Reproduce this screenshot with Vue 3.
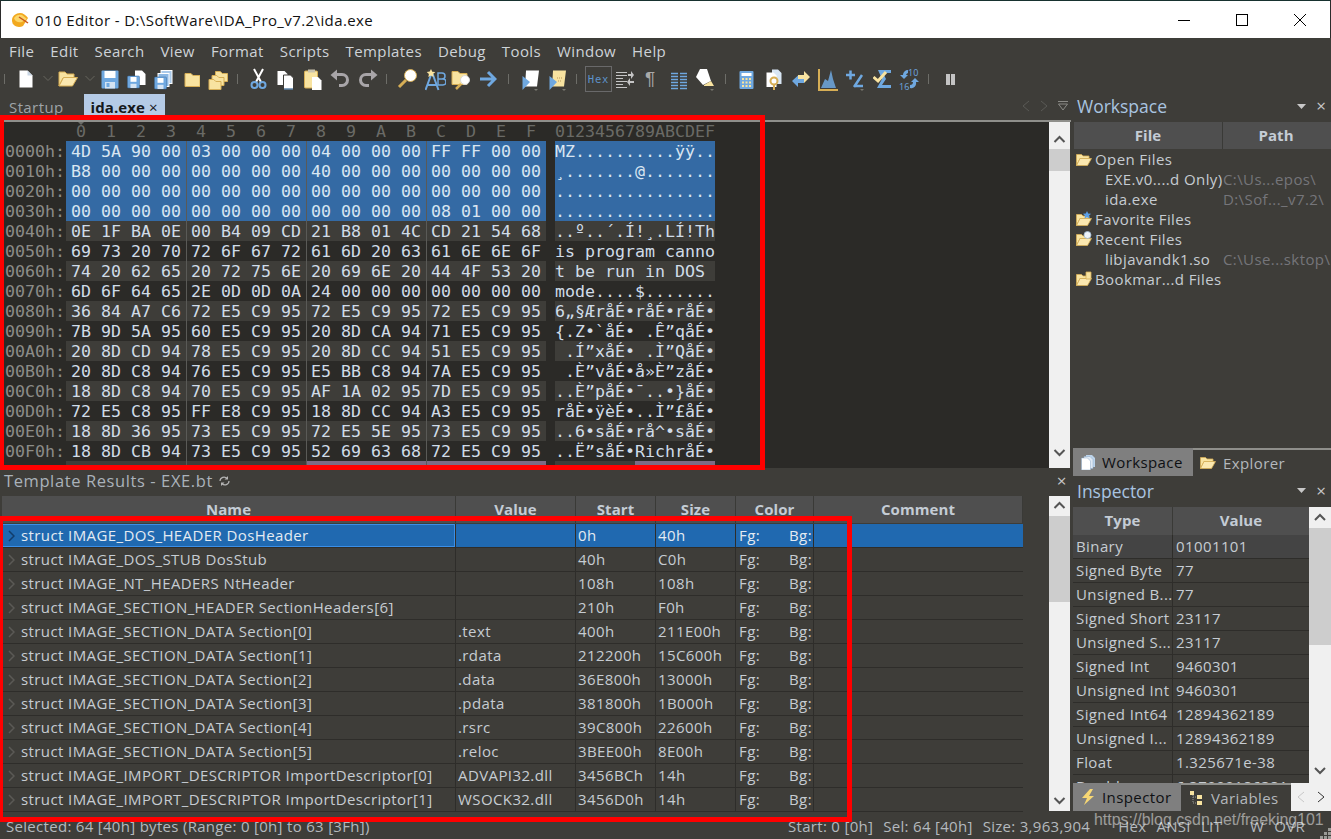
<script setup>
const menus = ['File', 'Edit', 'Search', 'View', 'Format', 'Scripts', 'Templates', 'Debug', 'Tools', 'Window', 'Help']

const Y = '#f8e3a0'
const YS = '#d6ae55'
const B = '#6fa8e0'

const folder = (x, y, w, h) =>
  `<path d="M${x + 0.5} ${y + 0.5}h${w * 0.4}l2 2h${w * 0.6 - 2}v${h - 2}h-${w}z" fill="${Y}" stroke="${YS}"/>`
const floppy = (x, y, s) =>
  `<rect x="${x}" y="${y}" width="${s}" height="${s}" rx="1" fill="${B}" stroke="#3f6f9f" stroke-width=".5"/><rect x="${x + 3}" y="${y + 1}" width="${s - 6}" height="${s * 0.4}" fill="#fff"/><rect x="${x + 3}" y="${y + s * 0.65}" width="${s - 6}" height="${s * 0.35}" fill="#d5e4f3"/>`
const drop = (x) => `<path d="M${x} 23h4l-2 2z" fill="#77776f"/>`

const icons = {
  new: '<path d="M.5 4.500h8l5 5v12H.5z" fill="#fff"/><path d="M8.500 4.500v5h5z" fill="#c9d6e4"/>',
  chev: '<path d="M.5 10l4.500 4.500L9.500 10" fill="none" stroke="#66665f"/>',
  open: `<path d="M1 6h6l2 2h7v4H5L1 20z" fill="${Y}" stroke="${YS}"/><path d="M5.500 11.500h14l-5 8.500H1z" fill="#fae8b0" stroke="${YS}"/>`,
  save: '<rect x=".5" y="4.500" width="17" height="18" rx="1" fill="#6fa8e0"/><rect x="3.500" y="5" width="11" height="7" fill="#fff"/><rect x="4" y="16" width="10" height="6.500" fill="#d5e4f3"/><rect x="5.500" y="17" width="3" height="4" fill="#6fa8e0"/>',
  saveas: `<path d="M8 4.500h7l3.500 3.500v11H8z" fill="#fff"/>${floppy(0.5, 10, 12)}`,
  saveall: `<rect x="7" y="4.500" width="11" height="13" fill="#a9c9ea" stroke="#fff"/><rect x="4" y="7.500" width="11" height="13" fill="#8cb8e4" stroke="#fff"/>${floppy(0.5, 11, 12)}`,
  folder: folder(0.5, 7, 15, 13),
  folders: `${folder(7, 5, 12, 10)}${folder(3.500, 9, 12, 10)}${folder(0.5, 13, 12, 10)}`,
  cut: '<path d="M4 3l7 13M13 3L6 16" stroke="#fff" stroke-width="2"/><circle cx="4.500" cy="19" r="3" fill="none" stroke="#6fa8e0" stroke-width="2"/><circle cx="12.500" cy="19" r="3" fill="none" stroke="#6fa8e0" stroke-width="2"/>',
  copy: '<path d="M.5 5h7l3 3v11H.5z" fill="#fff"/><path d="M6.500 9h7l3 3v11h-10z" fill="#fff" stroke="#3e3d39"/><path d="M7 23h9" stroke="#6fa8e0"/>',
  paste: `<rect x=".5" y="5" width="13" height="17" rx="1" fill="${Y}" stroke="${YS}"/><rect x="4" y="3.500" width="7" height="3" fill="#c9c3ae"/><path d="M8 11h6l3.500 3.500V24H8z" fill="#fff"/>`,
  undo: '<path d="M5 8.500h7a5.500 5.500 0 0 1 0 11H9" fill="none" stroke="#a8a5a8" stroke-width="3"/><path d="M7 3.500v11L.5 9z" fill="#a8a5a8"/>',
  redo: '<path d="M15 8.500H8a5.500 5.500 0 0 0 0 11h3" fill="none" stroke="#a8a5a8" stroke-width="3"/><path d="M13 3.500v11L19.500 9z" fill="#a8a5a8"/>',
  find: `<circle cx="13.500" cy="9.500" r="6" fill="#fff" stroke="${YS}"/><path d="M9 14l-7 7" stroke="${YS}" stroke-width="3"/>`,
  replace: `<path d="M.5 24L6 9h2l5.500 15M3 19h8" fill="none" stroke="${B}" stroke-width="2"/><path d="M6 3l1.300 2.700 3 .4-2.200 2 .6 3L6 9.500 3.300 11l.6-3-2.200-2 3-.4z" fill="${Y}"/><path d="M13 7h4a2.500 2.500 0 0 1 0 6h-4zM13 13h5a2.500 2.500 0 0 1 0 6h-5z" fill="none" stroke="${B}" stroke-width="1.500"/>`,
  findfiles: `${folder(0.5, 5, 15, 13)}<circle cx="14" cy="14" r="4.500" fill="#fff" stroke="#d8d8d8"/><path d="M10 18l-5 5" stroke="${YS}" stroke-width="2.500"/>`,
  goto: `<path d="M1 13h13M9 6l7 7-7 7" fill="none" stroke="${B}" stroke-width="3"/>`,
  script: `<path d="M4 4.500h13l-2 16H3z" fill="#fff"/><path d="M.5 10L8 16 .5 24z" fill="${B}"/>${drop(12)}`,
  template: `<path d="M4 4.500h13l-2 16H3z" fill="${Y}"/><path d="M8 12h5M9 15h4" stroke="#b9975a" stroke-dasharray="1 1"/><path d="M.5 10L8 16 .5 24z" fill="${B}"/>${drop(13)}`,
  lines: '<path d="M0 6.500h11M0 9.500h11M0 12.500h7M0 15.500h11M0 18.500h7M0 21.500h11" stroke="#c5c5c5"/><path d="M12 8h3V5l3 4-3 4v-3h-3zM18 15h-4v-3l-3 4 3 4v-3h4z" fill="#c5c5c5"/>',
  columns: '<path d="M0 7.500h7M0 10.500h7M0 13.500h7M0 16.500h7M0 19.500h7M0 22.500h7M9 7.500h7M9 10.500h7M9 13.500h7M9 16.500h7M9 19.500h7M9 22.500h7" stroke="#6fa8e0" stroke-width="1.500"/>',
  highlight: `<path d="M4 3l7 0 4 12-8 4-7-8z" fill="#fff"/><path d="M8 19l7-4 3 5H8z" fill="${Y}"/>${drop(14)}`,
  calc: `<rect x=".5" y="5" width="14" height="18" rx="1" fill="${B}"/><rect x="2.500" y="7" width="10" height="3" fill="#fff"/><path d="M3 12h2v2H3zM6.500 12h2v2h-2zM10 12h2v2h-2zM3 15.500h2v2H3zM6.500 15.500h2v2h-2zM10 15.500h2v2h-2zM3 19h2v2H3zM6.500 19h2v2h-2zM10 19h2v2h-2z" fill="${Y}"/>`,
  helpdoc: `<path d="M6 3.500h6l3.500 3.500v11H6z" fill="#d8e6f4"/><path d="M.5 6.500h7l3 3V21H.5z" fill="#fff"/><circle cx="8" cy="15" r="3.500" fill="none" stroke="${YS}" stroke-width="2"/><path d="M8 19v5" stroke="${YS}" stroke-width="2"/>`,
  arrows: `<path d="M6 9h6V5l6 6-6 6v-4H6z" fill="${Y}"/><path d="M12 13H6V9.500L0 15l6 6v-4h6z" fill="${B}"/>`,
  hist: `<path d="M1 3v21h19" fill="none" stroke="${YS}" stroke-width="2"/><path d="M3 22l4-9 3 2 3-11 2 9 3 9z" fill="${B}" opacity=".85"/>`,
  plusminus: `<path d="M0 9h9M4.500 4.500v9M8 21L16 9M8 20h9" fill="none" stroke="${B}" stroke-width="2.500"/>${drop(14)}`,
  check: `<path d="M5 4h13v3H10l3 6-4 6h9v3H4l5-9" fill="${B}"/><path d="M.5 11l4.500 4 8-9" fill="none" stroke="${Y}" stroke-width="3"/>`,
  conv: `<text x="9" y="10" font-size="9" letter-spacing="0" fill="${B}" font-family="Open Sans, sans-serif">10</text><text x="0" y="24" font-size="9" letter-spacing="0" fill="${B}" font-family="Open Sans, sans-serif">16</text><path d="M9 4a5 5 0 0 0-5 5H1l4 4 4-4H7a3 3 0 0 1 2-2zM11 22a5 5 0 0 0 6-6h3l-4-4-4 4h2a3 3 0 0 1-3 3z" fill="${B}"/>`,
  pause: '<path d="M0 8h4v11H0zM5 8h4v11H5z" fill="#c4c4c4"/>',
}

const toolDefs = [
  ['sep', 4, 1], ['new', 19, 14], ['chev', 43, 10], ['open', 58, 20], ['chev', 85, 10], ['save', 101, 18],
  ['saveas', 127, 19], ['saveall', 154, 19], ['folder', 184, 16], ['folders', 208, 20], ['sep', 237, 1],
  ['cut', 250, 17], ['copy', 277, 17], ['paste', 304, 18], ['undo', 330, 20], ['redo', 358, 20], ['sep', 386, 1],
  ['find', 397, 21], ['replace', 425, 21], ['findfiles', 451, 21], ['goto', 479, 18], ['sep', 508, 1],
  ['script', 522, 18], ['template', 549, 18], ['sep', 576, 1], ['hex', 585, 27], ['lines', 616, 18],
  ['pilcrow', 645, 12], ['columns', 671, 16], ['highlight', 696, 18], ['sep', 725, 1], ['calc', 739, 15],
  ['helpdoc', 766, 16], ['arrows', 792, 18], ['hist', 818, 20], ['plusminus', 846, 18], ['check', 873, 18],
  ['conv', 899, 20], ['sep', 928, 1], ['pause', 946, 9],
]

let toolEnd = 0
const tools = toolDefs.map(([name, x, w]) => {
  const t = { name, w, gap: x - toolEnd }
  toolEnd = x + w
  return t
})

const hexRows = [
  ['4D 5A 90 00 03 00 00 00 04 00 00 00 FF FF 00 00', 'MZ..........ÿÿ..'],
  ['B8 00 00 00 00 00 00 00 40 00 00 00 00 00 00 00', '¸.......@.......'],
  ['00 00 00 00 00 00 00 00 00 00 00 00 00 00 00 00', '................'],
  ['00 00 00 00 00 00 00 00 00 00 00 00 08 01 00 00', '................'],
  ['0E 1F BA 0E 00 B4 09 CD 21 B8 01 4C CD 21 54 68', '..º..´.Í!¸.LÍ!Th'],
  ['69 73 20 70 72 6F 67 72 61 6D 20 63 61 6E 6E 6F', 'is program canno'],
  ['74 20 62 65 20 72 75 6E 20 69 6E 20 44 4F 53 20', 't be run in DOS '],
  ['6D 6F 64 65 2E 0D 0D 0A 24 00 00 00 00 00 00 00', 'mode....$.......'],
  ['36 84 A7 C6 72 E5 C9 95 72 E5 C9 95 72 E5 C9 95', '6„§ÆråÉ•råÉ•råÉ•'],
  ['7B 9D 5A 95 60 E5 C9 95 20 8D CA 94 71 E5 C9 95', '{.Z•`åÉ• .Ê”qåÉ•'],
  ['20 8D CD 94 78 E5 C9 95 20 8D CC 94 51 E5 C9 95', ' .Í”xåÉ• .Ì”QåÉ•'],
  ['20 8D C8 94 76 E5 C9 95 E5 BB C8 94 7A E5 C9 95', ' .È”våÉ•å»È”zåÉ•'],
  ['18 8D C8 94 70 E5 C9 95 AF 1A 02 95 7D E5 C9 95', '..È”påÉ•¯..•}åÉ•'],
  ['72 E5 C8 95 FF E8 C9 95 18 8D CC 94 A3 E5 C9 95', 'råÈ•ÿèÉ•..Ì”£åÉ•'],
  ['18 8D 36 95 73 E5 C9 95 72 E5 5E 95 73 E5 C9 95', '..6•såÉ•rå^•såÉ•'],
  ['18 8D CB 94 73 E5 C9 95 52 69 63 68 72 E5 C9 95', '..Ë”såÉ•RichråÉ•'],
].map(([bytes, ascii], i) => {
  const b = bytes.split(' ')
  return {
    addr: `00${i.toString(16).toUpperCase()}0h:`,
    groups: [b.slice(0, 4), b.slice(4, 8), b.slice(8, 12), b.slice(12, 16)],
    ascii,
    cls: i < 4 ? 'sel' : i % 2 === 0 ? 'band' : '',
  }
})

const ruler = '0123456789ABCDEF'.split('')

const tmplRows = [
  ['struct IMAGE_DOS_HEADER DosHeader', '', '0h', '40h'],
  ['struct IMAGE_DOS_STUB DosStub', '', '40h', 'C0h'],
  ['struct IMAGE_NT_HEADERS NtHeader', '', '108h', '108h'],
  ['struct IMAGE_SECTION_HEADER SectionHeaders[6]', '', '210h', 'F0h'],
  ['struct IMAGE_SECTION_DATA Section[0]', '.text', '400h', '211E00h'],
  ['struct IMAGE_SECTION_DATA Section[1]', '.rdata', '212200h', '15C600h'],
  ['struct IMAGE_SECTION_DATA Section[2]', '.data', '36E800h', '13000h'],
  ['struct IMAGE_SECTION_DATA Section[3]', '.pdata', '381800h', '1B000h'],
  ['struct IMAGE_SECTION_DATA Section[4]', '.rsrc', '39C800h', '22600h'],
  ['struct IMAGE_SECTION_DATA Section[5]', '.reloc', '3BEE00h', '8E00h'],
  ['struct IMAGE_IMPORT_DESCRIPTOR ImportDescriptor[0]', 'ADVAPI32.dll', '3456BCh', '14h'],
  ['struct IMAGE_IMPORT_DESCRIPTOR ImportDescriptor[1]', 'WSOCK32.dll', '3456D0h', '14h'],
]

const inspector = [
  ['Binary', '01001101'],
  ['Signed Byte', '77'],
  ['Unsigned B...', '77'],
  ['Signed Short', '23117'],
  ['Unsigned S...', '23117'],
  ['Signed Int', '9460301'],
  ['Unsigned Int', '9460301'],
  ['Signed Int64', '12894362189'],
  ['Unsigned I...', '12894362189'],
  ['Float', '1.325671e-38'],
  ['Double', '6.37099186381'],
]

const tree = [
  { label: 'Open Files', icon: 'open' },
  { label: 'EXE.v0....d Only)', path: 'C:\\Us...epos\\' },
  { label: 'ida.exe', path: 'D:\\Sof..._v7.2\\' },
  { label: 'Favorite Files', icon: 'fav' },
  { label: 'Recent Files', icon: 'recent' },
  { label: 'libjavandk1.so', path: 'C:\\Use...sktop\\' },
  { label: 'Bookmar...d Files', icon: 'book' },
]
</script>

<template>
  <div class="app">
    <header class="titlebar">
      <svg class="logo" width="18" height="16" viewBox="0 0 18 16">
        <path d="M1 8C1 4 5 1 9 1c3 0 6 2 8 5l-5 8c-4 2-11 1-11-6z" fill="#f2a91f" />
        <path d="M3 6c2-3 5-4 8-3l5 4-5 3C8 11 4 10 3 6z" fill="#fbd66a" />
        <path d="M8 5l9 6" stroke="#c9541a" stroke-width="1.500" />
      </svg>
      <span class="title-text">010 Editor - D:\SoftWare\IDA_Pro_v7.2\ida.exe</span>
      <div class="win-btns">
        <svg width="12" height="12" viewBox="0 0 12 12"><path d="M0 6.500h12" stroke="#000" /></svg>
        <svg width="12" height="12" viewBox="0 0 12 12"><rect x=".5" y=".5" width="11" height="11" fill="none" stroke="#000" /></svg>
        <svg width="12" height="12" viewBox="0 0 12 12"><path d="M0 0l12 12M12 0L0 12" stroke="#000" /></svg>
      </div>
    </header>

    <nav class="menubar">
      <span v-for="m in menus" :key="m">{{ m }}</span>
    </nav>

    <div class="toolbar">
      <template v-for="(t, i) in tools" :key="i">
        <span v-if="t.name === 'sep'" class="tool-sep" :style="{ marginLeft: t.gap + 'px' }"></span>
        <span v-else-if="t.name === 'hex'" class="hex-btn" :style="{ marginLeft: t.gap + 'px' }">Hex</span>
        <span v-else-if="t.name === 'pilcrow'" class="pilcrow" :style="{ marginLeft: t.gap + 'px' }">¶</span>
        <svg
          v-else
          class="tool"
          :width="t.w"
          height="26"
          :viewBox="`0 0 ${t.w} 26`"
          :style="{ marginLeft: t.gap + 'px' }"
          v-html="icons[t.name]"
        ></svg>
      </template>
    </div>

    <div class="work">
      <div class="left">
        <section class="doc">
          <div class="tabstrip">
            <span class="tab-plain">Startup</span>
            <span class="tab-on">ida.exe <i>×</i></span>
            <div class="tab-nav">
              <svg width="8" height="12" viewBox="0 0 8 12"><path d="M7 1L1 6l6 5" fill="none" stroke="#5a5a56" /></svg>
              <svg width="8" height="12" viewBox="0 0 8 12"><path d="M1 1l6 5-6 5" fill="none" stroke="#5a5a56" /></svg>
              <svg width="10" height="12" viewBox="0 0 10 12"><path d="M0 1.500h10M.5 4l4.500 6 4.500-6z" fill="none" stroke="#8a8a86" /></svg>
            </div>
          </div>
          <div class="doc-line"></div>
          <div class="doc-body">
            <div class="hexview">
              <div class="ruler">
                <span class="addr"></span>
                <div class="ruler-hex"><span v-for="r in ruler" :key="r" class="ruler-col">{{ r }}</span></div>
                <span class="ascii plain">0123456789ABCDEF</span>
              </div>
              <div v-for="row in hexRows" :key="row.addr" class="hexrow">
                <span class="addr">{{ row.addr }}</span>
                <div class="hexcells" :class="row.cls">
                  <span v-for="(g, gi) in row.groups" :key="gi" class="grp">
                    <span v-for="(b, bi) in g" :key="bi" class="byte">{{ b }}</span>
                  </span>
                </div>
                <span class="ascii" :class="row.cls">{{ row.ascii }}</span>
              </div>
              <div class="hexrow">
                <span class="addr"></span>
                <div class="hexcells band">
                  <span class="grp"></span><span class="grp"></span>
                  <span class="grp pe"></span><span class="grp pe"></span>
                </div>
                <div class="ascii-split"><span class="band"></span><span class="pe"></span></div>
              </div>
            </div>
            <div class="sb">
              <svg class="sb-arrow" width="21" height="27" viewBox="0 0 21 27"><path d="M5.500 20l5-5 5 5" fill="none" stroke="#555" stroke-width="2" /></svg>
              <div class="sb-thumb thumb-doc"></div>
              <div class="sb-fill"></div>
              <svg class="sb-arrow" width="21" height="27" viewBox="0 0 21 27"><path d="M5.500 9l5 5 5-5" fill="none" stroke="#555" stroke-width="2" /></svg>
            </div>
          </div>
        </section>

        <section class="tmpl">
          <div class="tmpl-title">
            <span>Template Results - EXE.bt</span>
            <svg width="11" height="10" viewBox="0 0 11 10"><path d="M1 5a4 4 0 0 1 7-2.500M10 5a4 4 0 0 1-7 2.500" fill="none" stroke="#b5b5b5" stroke-width="1.200" /><path d="M9 0v3.500H5.500zM2 10V6.500h3.500z" fill="#b5b5b5" /></svg>
            <i class="x">×</i>
          </div>
          <div class="tmpl-body">
            <div class="tmpl-table">
              <div class="t-head">
                <span>Name</span><span>Value</span><span>Start</span><span>Size</span><span>Color</span><span>Comment</span>
              </div>
              <div v-for="(r, i) in tmplRows" :key="i" class="t-row" :class="{ on: i === 0 }">
                <span class="c-name">
                  <svg width="7" height="12" viewBox="0 0 7 12"><path d="M1 1l5 5-5 5" fill="none" :stroke="i === 0 ? '#123d6b' : '#5b5a56'" stroke-width="1.500" /></svg>
                  {{ r[0] }}
                </span>
                <span class="c-txt">{{ r[1] }}</span>
                <span class="c-txt">{{ r[2] }}</span>
                <span class="c-txt">{{ r[3] }}</span>
                <span class="c-color"><b>Fg:</b><b>Bg:</b></span>
                <span></span>
              </div>
            </div>
            <div class="sb">
              <svg class="sb-arrow" width="21" height="20" viewBox="0 0 21 20"><path d="M5.500 12l5-5 5 5" fill="none" stroke="#555" stroke-width="2" /></svg>
              <div class="sb-thumb thumb-tmpl"></div>
              <div class="sb-fill"></div>
              <svg class="sb-arrow" width="21" height="20" viewBox="0 0 21 20"><path d="M5.500 7l5 5 5-5" fill="none" stroke="#555" stroke-width="2" /></svg>
            </div>
          </div>
        </section>
      </div>

      <aside class="right">
        <section class="wsp">
          <div class="p-title">
            <span>Workspace</span>
            <svg width="9" height="5" viewBox="0 0 9 5"><path d="M0 0h9L4.500 5z" fill="#c8c8c8" /></svg>
            <i class="x">×</i>
          </div>
          <div class="w-head"><span>File</span><span>Path</span></div>
          <div class="w-tree">
            <div v-for="n in tree" :key="n.label" class="w-row" :class="{ child: !n.icon }">
              <svg v-if="n.icon" width="16" height="16" viewBox="0 0 16 16">
                <path d="M.5 3.500h5l1.500 1.500h6v2.500H4L.5 14.500z" fill="#f8e3a0" stroke="#d6ae55" stroke-width=".8" />
                <path d="M4 7.500h11.500l-4 7H.5z" fill="#fae8b0" stroke="#d6ae55" stroke-width=".8" />
                <path v-if="n.icon === 'fav'" d="M11 0l1.200 2.500 2.800.3-2 2 .5 2.700L11 6.200 8.500 7.500 9 4.800l-2-2 2.800-.3z" fill="#5b9fe6" />
                <circle v-if="n.icon === 'recent'" cx="11.500" cy="4" r="3.500" fill="#eef3f8" stroke="#9db6cf" stroke-width=".8" />
                <path v-if="n.icon === 'book'" d="M10 1h5v7h-5z" fill="#f8e3a0" stroke="#d6ae55" stroke-width=".8" />
              </svg>
              <span class="w-label">{{ n.label }}</span>
              <span v-if="n.path" class="w-path">{{ n.path }}</span>
            </div>
          </div>
          <div class="dock-tabs">
            <span class="dock-on">
              <svg width="14" height="16" viewBox="0 0 14 16"><path d="M5 1h6l3 3v9H5z" fill="#bcd3ea" /><path d="M3 2.500h6l3 3v9H3z" fill="#dfe9f4" stroke="#8aa9c9" stroke-width=".5" /><path d="M.5 4h6l3 3v9h-9z" fill="#fff" stroke="#8aa9c9" stroke-width=".5" /></svg>
              Workspace
            </span>
            <span class="dock-off">
              <svg width="16" height="14" viewBox="0 0 16 14"><path d="M.5 1.500h5l1.500 1.500h6v2.500H4L.5 12.500z" fill="#f8e3a0" stroke="#d6ae55" stroke-width=".8" /><path d="M4 5.500h11.500l-4 7H.5z" fill="#fae8b0" stroke="#d6ae55" stroke-width=".8" /></svg>
              Explorer
            </span>
          </div>
        </section>

        <section class="insp">
          <div class="p-title insp-title">
            <span>Inspector</span>
            <svg width="9" height="5" viewBox="0 0 9 5"><path d="M0 0h9L4.500 5z" fill="#c8c8c8" /></svg>
            <i class="x">×</i>
          </div>
          <div class="i-body">
            <div class="i-table">
              <div class="i-head"><span>Type</span><span>Value</span></div>
              <div v-for="(r, i) in inspector" :key="r[0]" class="i-row" :class="{ first: i === 0 }">
                <span>{{ r[0] }}</span><span>{{ r[1] }}</span>
              </div>
            </div>
            <div class="sb sb-insp">
              <svg class="sb-arrow" width="22" height="21" viewBox="0 0 22 21"><path d="M6 13l5-5 5 5" fill="none" stroke="#555" stroke-width="2" /></svg>
              <div class="sb-thumb thumb-insp"></div>
              <div class="sb-fill"></div>
              <svg class="sb-arrow" width="22" height="21" viewBox="0 0 22 21"><path d="M6 6l5 5 5-5" fill="none" stroke="#555" stroke-width="2" /></svg>
            </div>
          </div>
          <div class="dock-tabs dock-insp">
            <span class="dock-on">
              <svg width="14" height="16" viewBox="0 0 14 16"><path d="M9 0L1 9h5l-3 7 10-9H8l4-7z" fill="#f7d774" /></svg>
              Inspector
            </span>
            <span class="dock-off">
              <svg width="12" height="16" viewBox="0 0 12 16"><path d="M0 1h4v4H0zM7 5h5v4H7zM7 11h5v4H7z" fill="#f8e3a0" /><path d="M3 5v8h4M3 7h4" fill="none" stroke="#9a9a96" stroke-dasharray="1 1" /></svg>
              Variables
            </span>
            <div class="dock-nav">
              <svg width="8" height="12" viewBox="0 0 8 12"><path d="M7 1L1 6l6 5" fill="none" stroke="#c8c8c8" /></svg>
              <svg width="8" height="12" viewBox="0 0 8 12"><path d="M1 1l6 5-6 5" fill="none" stroke="#333" /></svg>
            </div>
          </div>
        </section>
      </aside>
    </div>

    <footer class="status">
      <span>Selected: 64 [40h] bytes (Range: 0 [0h] to 63 [3Fh])</span>
      <div class="st-right">
        <span>Start: 0 [0h]</span>
        <span>Sel: 64 [40h]</span>
        <span>Size: 3,963,904</span>
        <span class="st-wide">Hex</span>
        <span>ANSI</span>
        <span>LIT</span>
        <span class="st-wide">W</span>
        <span>OVR</span>
      </div>
    </footer>

    <svg class="grip" width="11" height="11" viewBox="0 0 11 11"><path d="M8 0h3v3H8zM4 4h3v3H4zM8 4h3v3H8zM0 8h3v3H0zM4 8h3v3H4zM8 8h3v3H8z" fill="#9a9a96" /></svg>
    <span class="watermark">https://blog.csdn.net/freeking101</span>
    <div class="mark mark-hex"></div>
    <div class="mark mark-tmpl"></div>
  </div>
</template>

<style>
html,
body {
  margin: 0;
  background: #3e3d39;
}
</style>

<style scoped>
.app {
  position: relative;
  display: flex;
  flex-direction: column;
  width: 1331px;
  height: 839px;
  overflow: hidden;
  background: #3e3d39;
  color: #c6ccd2;
  font-family: 'Open Sans', 'Noto Sans', sans-serif;
  font-size: 15px;
  letter-spacing: 0.4px;
  line-height: 20px;
}

i {
  font-style: normal;
}

.titlebar {
  display: flex;
  align-items: center;
  flex: none;
  box-sizing: border-box;
  height: 38px;
  padding-left: 11px;
  border-top: 1px solid #17322f;
  border-left: 1px solid #2b2b2b;
  border-right: 1px solid #2b2b2b;
  background: #fff;
  color: #111;
}

.logo {
  margin-left: -1px;
}

.title-text {
  margin-left: 6px;
}

.win-btns {
  display: flex;
  gap: 46px;
  margin-left: auto;
  margin-right: 24px;
}

.menubar {
  display: flex;
  align-items: center;
  flex: none;
  box-sizing: border-box;
  gap: 16px;
  height: 28px;
  padding: 0 0 2px 9px;
  color: #ced3d8;
}

.toolbar {
  display: flex;
  align-items: center;
  flex: none;
  height: 26px;
}

.tool {
  flex: none;
}

.tool-sep {
  flex: none;
  width: 1px;
  height: 10px;
  background: #6d6d68;
}

.hex-btn {
  flex: none;
  box-sizing: border-box;
  width: 27px;
  height: 26px;
  border: 1px solid #69696a;
  color: #5d92ca;
  font-family: 'DejaVu Sans Mono', monospace;
  font-size: 10.5px;
  letter-spacing: 0.8px;
  line-height: 24px;
  text-align: center;
}

.pilcrow {
  flex: none;
  width: 12px;
  color: #a9a9a9;
  font-family: 'Liberation Sans', sans-serif;
  font-size: 19px;
  line-height: 26px;
}

.work {
  display: flex;
  flex: 1;
  min-height: 0;
}

.left {
  display: flex;
  flex-direction: column;
  flex: none;
  width: 1071px;
}

.doc {
  flex: none;
  height: 378px;
}

.tabstrip {
  display: flex;
  align-items: flex-end;
  height: 28px;
  padding-left: 9px;
}

.tab-plain {
  height: 25px;
  color: #9fa4a8;
  line-height: 25px;
}

.tab-on {
  height: 26px;
  margin-left: 20px;
  padding: 0 7px;
  background: #b5cbe6;
  color: #16181b;
  font-weight: 700;
  letter-spacing: 0.1px;
  line-height: 26px;
  white-space: nowrap;
}

.tab-on i {
  font-weight: 400;
}

.tab-nav {
  display: flex;
  align-items: center;
  gap: 10px;
  margin-left: auto;
  margin-right: 3px;
  height: 28px;
}

.doc-line {
  height: 2px;
  background: #8f8f8b;
}

.doc-body {
  display: flex;
  height: 346px;
}

.hexview {
  flex: none;
  width: 1049px;
  overflow: hidden;
  background: #2b2a27;
  color: #d0dce8;
  font-family: 'DejaVu Sans Mono', monospace;
  font-size: 16.61px;
  letter-spacing: 0;
  line-height: 22px;
}

.ruler {
  display: flex;
  height: 19px;
  color: #6a6a66;
  line-height: 19px;
}

.ruler-hex {
  display: grid;
  grid-template-columns: repeat(16, 30px);
  width: 480px;
  text-align: center;
}

.ruler-col {
  position: relative;
}

.ruler-col:first-child::before {
  content: '';
  position: absolute;
  left: 12px;
  top: 0;
  border: 3px solid transparent;
  border-top-color: #6a6a66;
}

.addr {
  flex: none;
  box-sizing: border-box;
  width: 66px;
  padding-left: 5px;
  color: #8c8c88;
}

.hexrow {
  display: flex;
  height: 20px;
}

.hexcells {
  display: flex;
  flex: none;
  width: 480px;
}

.grp {
  display: flex;
  flex: none;
  box-sizing: border-box;
  width: 120px;
}

.grp + .grp {
  box-shadow: inset 1px 0 0 #5a5a57;
}

.byte {
  flex: none;
  width: 30px;
  padding-left: 5px;
  box-sizing: border-box;
}

.ascii {
  flex: none;
  width: 160px;
  margin-left: 9px;
  white-space: pre;
}

.ascii.plain {
  margin-left: 9px;
}

.ascii-split {
  display: flex;
  flex: none;
  width: 160px;
  margin-left: 9px;
}

.ascii-split span {
  width: 80px;
}

.sel {
  background: #346aa4;
  color: #d9e6f2;
}

.band {
  background: #3e3d39;
}

.pe {
  background: #7d6b85;
}

.sb {
  display: flex;
  flex-direction: column;
  flex: none;
  width: 21px;
  background: #f0f0f0;
}

.sb-arrow {
  flex: none;
  display: block;
}

.sb-thumb {
  flex: none;
  background: #cdcdcd;
}

.sb-fill {
  flex: 1;
}

.thumb-doc {
  height: 22px;
}

.tmpl {
  display: flex;
  flex-direction: column;
  flex: 1;
  min-height: 0;
}

.tmpl-title {
  display: flex;
  align-items: center;
  gap: 6px;
  flex: none;
  box-sizing: border-box;
  height: 26px;
  padding: 0 0 4px 4px;
  color: #aab2ba;
  font-size: 16.5px;
  letter-spacing: 0.6px;
}

.x {
  margin-left: auto;
  color: #c8c8c8;
  font-size: 17px;
  line-height: 18px;
}

.tmpl-title .x {
  margin-right: 4px;
}

.tmpl-body {
  display: flex;
  height: 315px;
}

.tmpl-table {
  flex: none;
  width: 1021px;
  height: 316px;
  margin-left: 2px;
  margin-right: 26px;
  overflow: hidden;
}

.t-head,
.t-row {
  display: grid;
  grid-template-columns: 454px 120px 80px 80px 78px 209px;
}

.t-head {
  height: 27px;
  margin-bottom: 1px;
  background: #4f4f4f;
  color: #c4ccd5;
  font-weight: 700;
  letter-spacing: 0.1px;
  line-height: 26px;
  text-align: center;
}

.t-head span {
  border-right: 1px solid #3a3a37;
}

.t-row {
  box-sizing: border-box;
  height: 24px;
  border-bottom: 1px solid #2e2d2a;
  line-height: 23px;
  white-space: nowrap;
}

.t-row > span {
  border-right: 1px solid #2e2d2a;
}

.t-row > span:last-child {
  border-right: 0;
}

.t-row.on {
  background: #2069b0;
  color: #e4ebf2;
}

.c-name {
  display: flex;
  align-items: center;
  gap: 6px;
  padding-left: 6px;
}

.on .c-name {
  box-shadow: inset 0 0 0 1px #3a8fe8;
}

.c-txt {
  padding-left: 2px;
}

.c-color {
  display: flex;
  justify-content: space-between;
  padding: 0 1px 0 3px;
}

.c-color b {
  font-weight: 400;
}

.thumb-tmpl {
  height: 86px;
}

.right {
  display: flex;
  flex-direction: column;
  flex: none;
  width: 260px;
}

.wsp {
  display: flex;
  flex-direction: column;
  flex: none;
  height: 384px;
}

.p-title {
  display: flex;
  align-items: center;
  flex: none;
  box-sizing: border-box;
  gap: 8px;
  height: 30px;
  padding: 0 5px 2px 6px;
  color: #a9c4e0;
  font-size: 17.5px;
  letter-spacing: 0;
}

.p-title svg {
  margin-left: auto;
}

.p-title .x {
  margin-left: 2px;
}

.w-head {
  display: grid;
  flex: none;
  grid-template-columns: 149px 106px;
  height: 27px;
  margin-left: 3px;
  background: #4f4f4f;
  color: #c4ccd5;
  font-weight: 700;
  letter-spacing: 0.1px;
  line-height: 27px;
  text-align: center;
}

.w-head span:first-child {
  border-right: 1px solid #3a3a37;
}

.w-tree {
  flex: 1;
}

.w-row {
  display: flex;
  align-items: center;
  gap: 3px;
  height: 20px;
  padding-left: 5px;
  white-space: nowrap;
}

.w-row.child {
  padding-left: 34px;
}

.w-label {
  flex: none;
}

.w-row.child .w-label {
  width: 115px;
}

.w-path {
  color: #75757a;
}

.dock-tabs {
  display: flex;
  flex: none;
  align-items: stretch;
  height: 28px;
  margin-left: 2px;
  box-shadow: inset 0 2px 0 #8f8f8b;
  white-space: nowrap;
}

.dock-on,
.dock-off {
  display: flex;
  align-items: center;
  gap: 7px;
}

.dock-on {
  width: 120px;
  box-sizing: border-box;
  padding-left: 8px;
  background: #7f7f7f;
  color: #0e1013;
}

.dock-off {
  padding: 2px 0 0 7px;
  color: #b4b8bc;
}

.insp {
  display: flex;
  flex-direction: column;
  flex: none;
  height: 335px;
}

.insp-title {
  height: 31px;
}

.i-body {
  display: flex;
  height: 276px;
  margin-left: 2px;
}

.i-table {
  flex: none;
  width: 236px;
  overflow: hidden;
}

.i-head,
.i-row {
  display: grid;
  grid-template-columns: 100px 136px;
}

.i-head {
  height: 28px;
  background: #4f4f4f;
  color: #c4ccd5;
  font-weight: 700;
  letter-spacing: 0.1px;
  line-height: 27px;
  text-align: center;
}

.i-head span:first-child {
  border-right: 1px solid #3a3a37;
}

.i-row {
  box-sizing: border-box;
  height: 24px;
  border-bottom: 1px solid #2e2d2a;
  line-height: 23px;
  white-space: nowrap;
}

.i-row.first {
  background: #444444;
}

.i-row span {
  padding-left: 3px;
}

.i-row span:first-child {
  border-right: 1px solid #2e2d2a;
}

.sb-insp {
  width: 22px;
}

.thumb-insp {
  height: 117px;
}

.dock-insp .dock-on {
  width: 108px;
}

.dock-insp .dock-off {
  padding-left: 9px;
  gap: 9px;
}

.dock-nav {
  display: flex;
  align-items: center;
  justify-content: space-around;
  width: 40px;
  margin-left: auto;
  background: #f0f0f0;
}

.status {
  display: flex;
  flex: none;
  height: 20px;
  padding: 0 26px 0 6px;
  color: #b4b9be;
  letter-spacing: 0.3px;
  line-height: 15px;
  white-space: nowrap;
}

.st-right {
  display: flex;
  gap: 10px;
  margin-left: auto;
}

.st-wide {
  margin-left: 18px;
}

.grip {
  position: absolute;
  right: 0;
  bottom: 0;
}

.watermark {
  position: absolute;
  left: 1094px;
  top: 811px;
  color: rgba(255, 255, 255, 0.5);
  font-family: 'Liberation Sans', sans-serif;
  font-size: 15.9px;
  letter-spacing: 0;
  line-height: 18px;
  white-space: nowrap;
}

.mark {
  position: absolute;
  box-sizing: border-box;
  border: 5px solid #ff0000;
}

.mark-hex {
  left: -1px;
  top: 115px;
  width: 766px;
  height: 355px;
}

.mark-tmpl {
  left: -2px;
  top: 516px;
  width: 854px;
  height: 306px;
}
</style>
